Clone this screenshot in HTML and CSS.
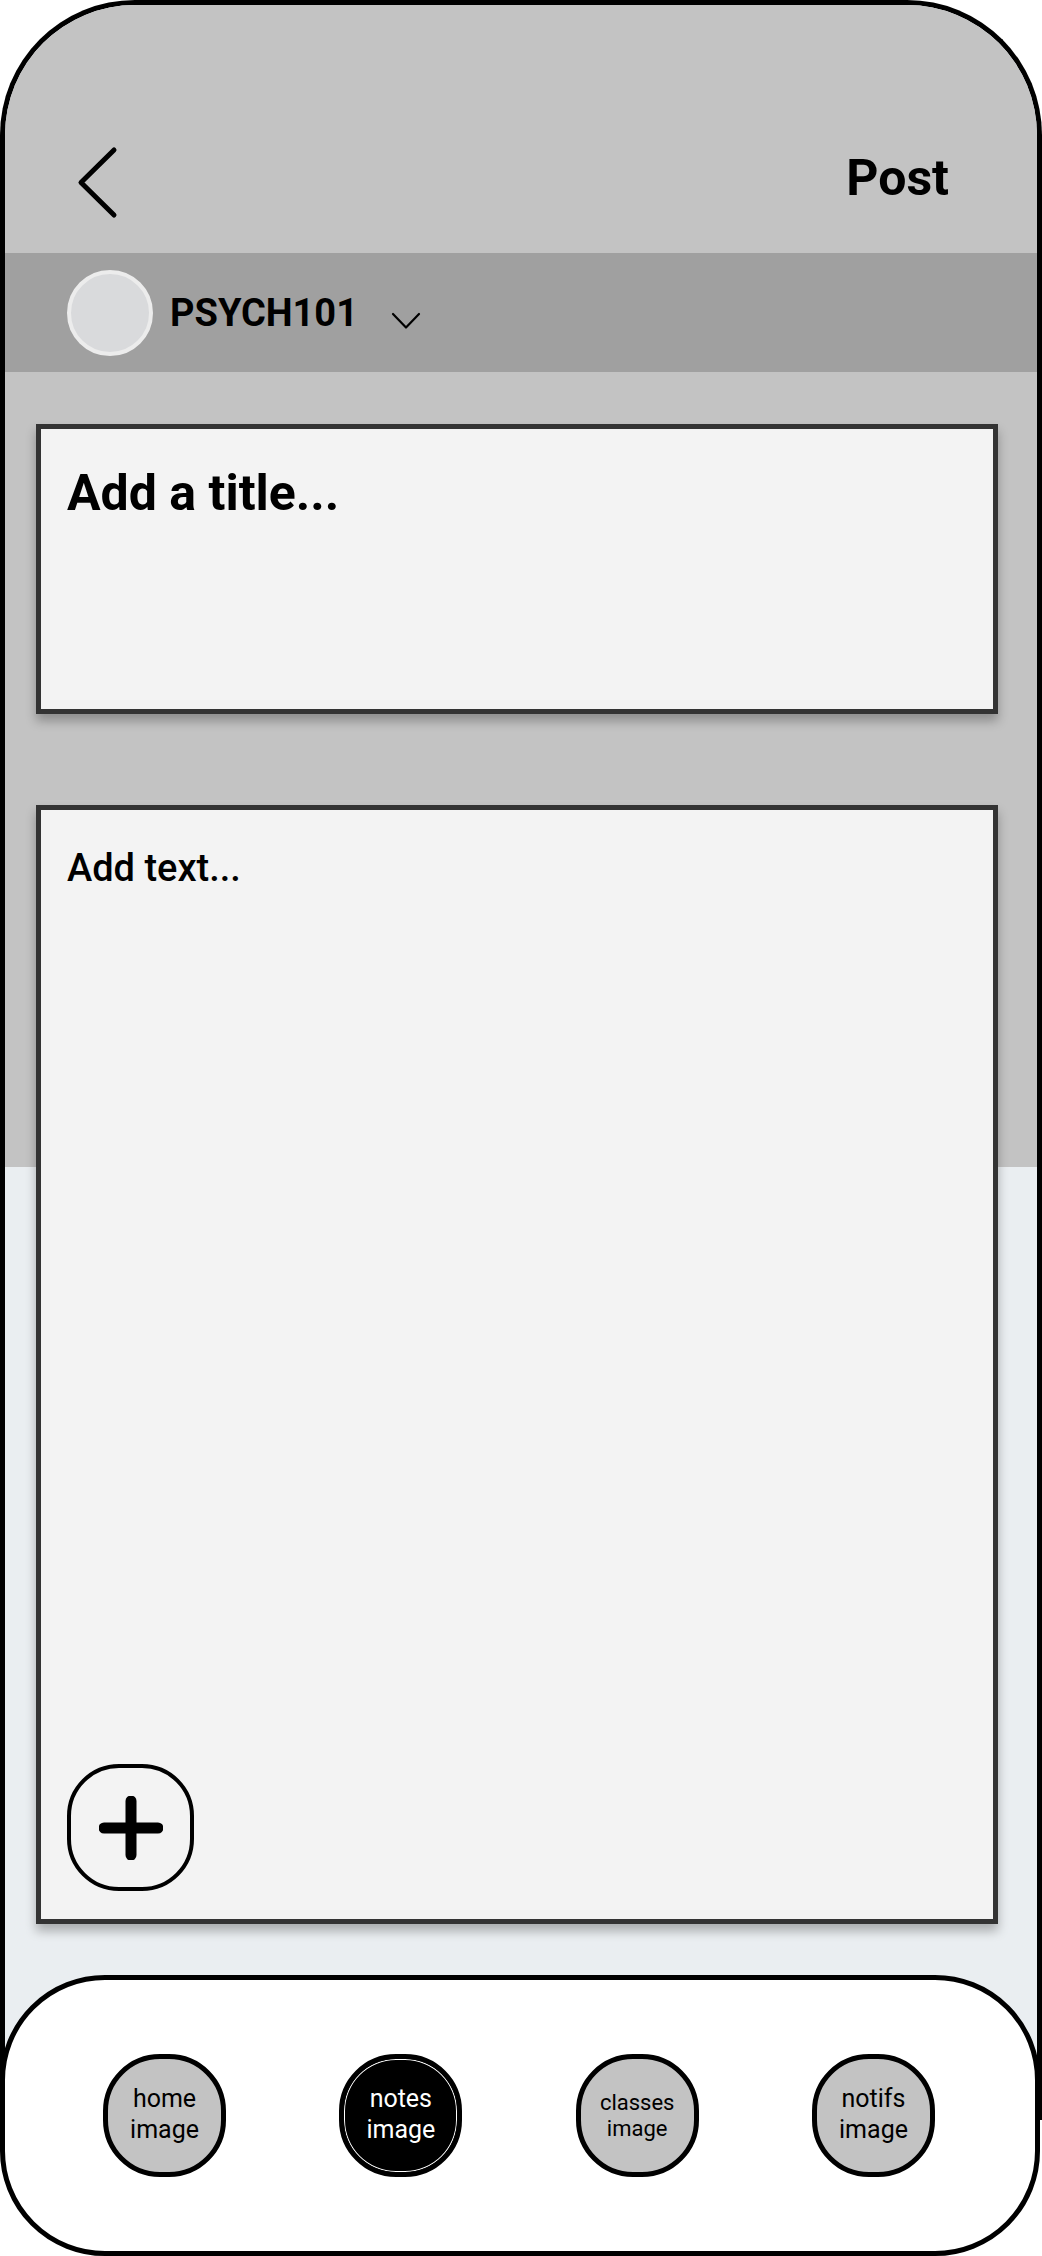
FILE: index.html
```html
<!DOCTYPE html>
<html lang="en">
<head>
<meta charset="utf-8">
<title>Post</title>
<link rel="stylesheet" href="styles.css">
</head>
<body>
<div class="frame">
  <header class="topbar">
    <svg class="back" width="44" height="74" viewBox="0 0 44 74" aria-hidden="true">
      <polyline points="38,4 5,36.5 38,69" fill="none" stroke="#000" stroke-width="5" stroke-linecap="round" stroke-linejoin="round"/>
    </svg>
    <div class="post">Post</div>
  </header>
  <div class="classbar">
    <div class="avatar"></div>
    <div class="classname">PSYCH101</div>
    <svg class="caret" width="30" height="18" viewBox="0 0 30 18" aria-hidden="true">
      <polyline points="2,2 15,15.5 28,2" fill="none" stroke="#000" stroke-width="2.2" stroke-linecap="round" stroke-linejoin="round"/>
    </svg>
  </div>
  <main class="content">
    <div class="titlebox">
      <div class="title-ph">Add a title...</div>
    </div>
    <div class="textbox">
      <div class="text-ph">Add text...</div>
      <div class="addbtn">
        <svg width="64" height="64" viewBox="0 0 64 64" aria-hidden="true">
          <line x1="32" y1="5" x2="32" y2="59" stroke="#000" stroke-width="11" stroke-linecap="round"/>
          <line x1="5" y1="32" x2="59" y2="32" stroke="#000" stroke-width="11" stroke-linecap="round"/>
        </svg>
      </div>
    </div>
  </main>
</div>
<nav class="tabbar">
  <div class="tab"><span>home<br>image</span></div>
  <div class="tab active"><span>notes<br>image</span></div>
  <div class="tab small"><span>classes<br>image</span></div>
  <div class="tab"><span>notifs<br>image</span></div>
</nav>
</body>
</html>
```
FILE: styles.css
```css
html, body {
  margin: 0;
  padding: 0;
  background: #ffffff;
}
body {
  width: 1042px;
  font-family: Roboto, "Liberation Sans", Arial, sans-serif;
  color: #000;
}
.frame {
  box-sizing: border-box;
  width: 1042px;
  border: 5px solid #000;
  border-bottom: none;
  border-radius: 135px 135px 0 0;
  overflow: hidden;
  background: #eaeef1;
}
.topbar {
  box-sizing: border-box;
  height: 248px;
  background: #c3c3c3;
  display: flex;
  align-items: flex-start;
  justify-content: space-between;
  padding: 141px 88px 0 71px;
}
.back {
  display: block;
}
.post {
  font-size: 50px;
  font-weight: 700;
  line-height: 50px;
  margin-top: 7px;
}
.classbar {
  height: 119px;
  background: #a0a0a0;
  display: flex;
  align-items: center;
  padding-left: 62px;
}
.avatar {
  box-sizing: border-box;
  width: 86px;
  height: 86px;
  border-radius: 50%;
  background: #d9dadc;
  border: 4px solid #ececec;
}
.classname {
  margin-left: 17px;
  font-size: 38px;
  font-weight: 700;
  line-height: 40px;
}
.caret {
  display: block;
  margin-left: 33px;
  margin-top: 16px;
}
.content {
  padding: 52px 39px 196px 31px;
  background: linear-gradient(#c3c3c3 0, #c3c3c3 795px, #eaeef1 795px);
}
.titlebox, .textbox {
  box-sizing: border-box;
  background: #f3f3f3;
  border: 5px solid #333333;
  box-shadow: 0 7px 10px rgba(0, 0, 0, 0.28);
}
.titlebox {
  height: 290px;
  padding: 34px 26px 0;
}
.title-ph {
  font-size: 50px;
  font-weight: 700;
  line-height: 60px;
}
.textbox {
  height: 1119px;
  margin-top: 91px;
  padding: 35px 26px 28px;
  display: flex;
  flex-direction: column;
  justify-content: space-between;
  align-items: flex-start;
}
.text-ph {
  font-size: 38px;
  font-weight: 500;
  line-height: 46px;
}
.addbtn {
  box-sizing: border-box;
  width: 127px;
  height: 127px;
  border: 4px solid #000;
  border-radius: 52px;
  display: flex;
  align-items: center;
  justify-content: center;
}
.addbtn svg {
  display: block;
}
.tabbar {
  position: relative;
  box-sizing: border-box;
  width: 1040px;
  height: 281px;
  margin-top: -145px;
  background: #ffffff;
  border: 5px solid #000;
  border-radius: 105px;
  display: flex;
  align-items: center;
  justify-content: space-between;
  padding: 0 100px 0 98px;
}
.tab {
  box-sizing: border-box;
  width: 123px;
  height: 123px;
  border: 5px solid #000;
  border-radius: 57px;
  background: #c3c3c3;
  display: flex;
  align-items: center;
  justify-content: center;
  text-align: center;
  font-size: 25px;
  line-height: 31px;
  color: #000;
  padding-bottom: 4px;
}
.tab.small {
  font-size: 22px;
  line-height: 26px;
  padding-bottom: 0;
}
.tab.active {
  background: #000;
  color: #fff;
  box-shadow: inset 0 0 0 1px #ffffff;
}
```
